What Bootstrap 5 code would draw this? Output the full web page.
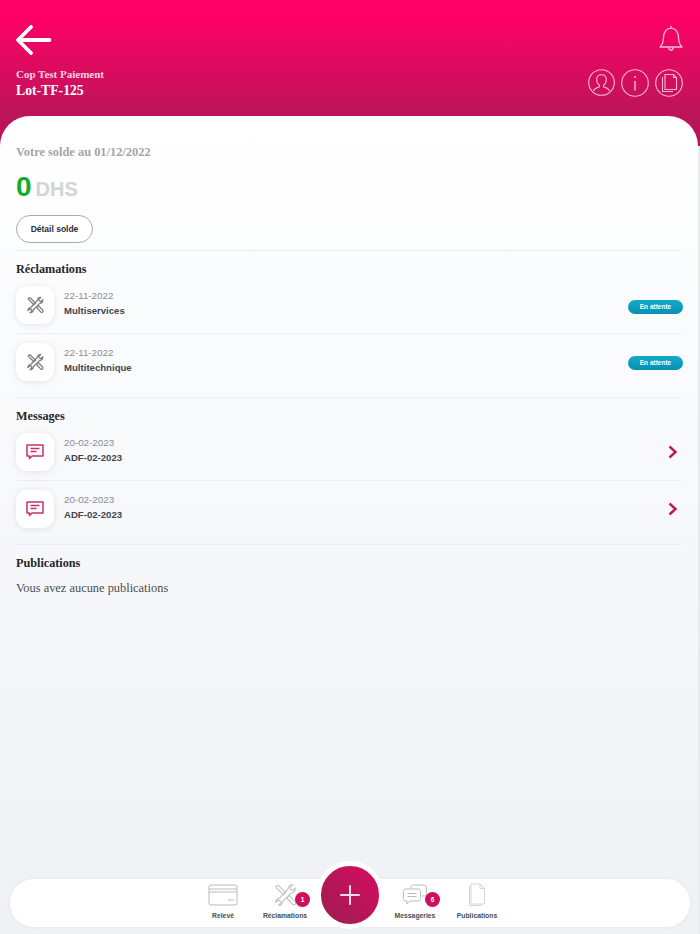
<!DOCTYPE html>
<html lang="fr">
<head>
  <meta charset="UTF-8">
  <title>Lot-TF-125</title>
  <link href="https://cdn.jsdelivr.net/npm/bootstrap@5.3.2/dist/css/bootstrap.min.css" rel="stylesheet">
  <style>
    body {
      background-color: #e9ebee;
      font-family: "Liberation Sans", Arial, sans-serif;
      overflow: hidden;
    }
    .screen {
      height: 934px;
    }
    .top-band {
      height: 146px;
      padding: 25px 16px 0 16px;
      background: linear-gradient(180deg, #ff0066 10%, #bb1559 80%);
      color: #fff;
    }
    .bell-col {
      margin-top: -1px;
    }
    .serif {
      font-family: "Liberation Serif", "Times New Roman", serif;
      font-weight: 700;
    }
    .cop-name {
      font-size: 11px;
      line-height: 12px;
      margin-top: 13px;
      color: #fbd3e2;
    }
    .lot-name {
      font-size: 13.7px;
      line-height: 16px;
      margin-top: 3px;
    }
    .round-icons {
      margin-top: 17px;
      gap: 6px;
      margin-right: 1px;
    }
    .sheet {
      margin-top: -30px;
      margin-right: 2px;
      border-radius: 30px 30px 0 0;
      background: linear-gradient(180deg, #ffffff 0%, #f9fafc 35%, #eff1f4 100%);
      padding: 29px 16px 7px 16px;
      min-height: 0;
    }
    .solde-date {
      font-size: 12.4px;
      line-height: 14px;
      color: #a3a5aa;
    }
    .solde-line {
      margin-top: 13px;
      line-height: 30px;
      font-weight: 700;
    }
    .solde-zero {
      font-size: 28px;
      color: #12ad2b;
    }
    .solde-unit {
      font-size: 20px;
      color: #d2d4d8;
      margin-left: 4px;
    }
    .solde-btn {
      width: 77px;
      height: 28px;
      margin-top: 9px;
      margin-bottom: 7px;
      padding: 0;
      font-size: 8.5px;
      font-weight: 700;
      color: #2a2d33;
      background: #fff;
      border: 1px solid #a9abaf;
      border-radius: 14px;
    }
    .section-head {
      border-top: 1px solid #eceef1;
      padding-top: 11px;
    }
    .block-title {
      font-size: 12.2px;
      line-height: 14px;
      margin-bottom: 1px;
      color: #23262b;
    }
    .entry {
      height: 56px;
      display: flex;
      align-items: center;
    }
    .entry + .entry {
      border-top: 1px solid #eceef1;
    }
    .tile {
      width: 38px;
      height: 38px;
      border-radius: 11px;
      background: #fff;
      box-shadow: 0 1px 6px rgba(60, 70, 90, .12);
      margin-right: 10px;
    }
    .entry-text {
      padding-bottom: 3px;
    }
    .entry-date {
      font-size: 9.8px;
      line-height: 12px;
      color: #8b8e94;
    }
    .entry-name {
      font-size: 9.6px;
      line-height: 12px;
      margin-top: 3px;
      font-weight: 700;
      color: #3f454d;
    }
    .wait-pill {
      width: 55px;
      height: 14px;
      margin: 3px -1px 0 0;
      border-radius: 7px;
      background: linear-gradient(180deg, #12aacb, #0a8fb3);
      color: #fff;
      font-size: 6.5px;
      font-weight: 700;
    }
    .empty-note {
      font-family: "Liberation Serif", "Times New Roman", serif;
      font-size: 12.4px;
      line-height: 14px;
      color: #4a4d52;
      margin-top: 11px;
    }
    .tab-bar {
      margin: auto -8px 0 -6px;
      height: 48px;
      border-radius: 24px;
      background: #fff;
      box-shadow: 0 0 4px rgba(60, 70, 90, .06);
    }
    .tab-item {
      width: 62px;
      height: 48px;
      padding-top: 4px;
      color: #4a4d52;
      font-size: 6.8px;
      font-weight: 700;
      line-height: 8px;
    }
    .tab-icon {
      height: 24px;
      margin-bottom: 5px;
    }
    .count-dot {
      position: absolute;
      top: 13px;
      right: 6px;
      width: 15px;
      height: 15px;
      border-radius: 50%;
      background: #cf0f5e;
      color: #fff;
      font-size: 6.5px;
      line-height: 15px;
      text-align: center;
    }
    .add-btn {
      width: 68px;
      height: 68px;
      margin-top: -18px;
      padding: 0;
      border: 5px solid #fff;
      border-radius: 50%;
      background: linear-gradient(45deg, #9d1d52, #d60c60);
      flex: none;
    }
  </style>
</head>
<body>

<div class="screen d-flex flex-column">
  <header class="top-band d-flex justify-content-between">
    <div>
      <svg width="36" height="30" viewBox="0 0 36 30" fill="none" stroke="#fff" stroke-width="3.8" stroke-linecap="round" stroke-linejoin="round" class="d-block">
        <path d="M33.500 15H2.500M15 2 2 15 15 28"/>
      </svg>
      <div class="serif cop-name">Cop Test Paiement</div>
      <div class="serif lot-name">Lot-TF-125</div>
    </div>
    <div class="bell-col d-flex flex-column align-items-end">
      <svg width="26" height="28" viewBox="0 0 26 28" fill="none" stroke="#f9bcd3" stroke-width="1.3" stroke-linejoin="round" class="d-block">
        <path d="M2 23c2.500-2.500 3.500-5 3.500-9.500C5.500 8 8.500 4.200 13 4.200S20.500 8 20.500 13.500c0 4.500 1 7 3.500 9.500zM13 4.200V1.800M10.500 23.500c.5 1.800 1.400 2.600 2.500 2.600s2-.8 2.500-2.600"/>
      </svg>
      <div class="d-flex round-icons">
        <svg width="27" height="27" viewBox="0 0 27 27" fill="none" stroke="#f6b6cf" stroke-width="1.1">
          <circle cx="13.500" cy="13.500" r="12.800"/>
          <path d="M5.500 22c.5-2.500 3.500-3 6-4.300v-1.500c-1.800-1.200-2.800-3.200-2.800-5.700 0-3 2-4.800 4.800-4.800s4.800 1.800 4.800 4.800c0 2.500-1 4.500-2.800 5.700v1.500c2.500 1.300 5.500 1.800 6 4.300"/>
        </svg>
        <svg width="28" height="28" viewBox="0 0 28 28" fill="none" stroke="#f6b6cf" stroke-width="1.1">
          <circle cx="14" cy="14" r="13.300"/>
          <path d="M14 12v9.500" stroke-width="1.500"/>
          <path d="M14 7v1.800" stroke-width="1.800"/>
        </svg>
        <svg width="28" height="28" viewBox="0 0 28 28" fill="none" stroke="#f6b6cf" stroke-width="1.1">
          <circle cx="14" cy="14" r="13.300"/>
          <path d="M7.500 8v14.500H18M10 5.500h8.500l3 3v12H10zM18.500 5.500v3h3"/>
        </svg>
      </div>
    </div>
  </header>

  <main class="sheet flex-grow-1 d-flex flex-column">
    <div class="serif solde-date">Votre solde au 01/12/2022</div>
    <div class="solde-line"><span class="solde-zero">0</span><span class="solde-unit">DHS</span></div>
    <button type="button" class="btn solde-btn d-block">Détail solde</button>

    <div class="section-head">
      <div class="serif block-title">Réclamations</div>
    </div>
    <div class="entry">
      <div class="tile d-flex align-items-center justify-content-center">
        <svg width="18" height="18" viewBox="0 0 20 20" fill="none" stroke="#7b7e84" stroke-width="1.400" stroke-linejoin="round" stroke-linecap="round">
          <path d="M2.500 2.500 4.500 2l6 6-1.800 1.800-6-6zM16.500 1.500l-2.300 2.300.7 1.700 1.700.7 2-2c.3 2-1 4-3.300 4L8 15.500c0 2-1.500 3.300-3.500 3.100l2-2-.6-1.700-1.700-.6-2 2c-.2-2 1.200-3.500 3.100-3.500L12.500 5c0-2 2-3.800 4-3.500zM11.500 12.500l2-2 5 5c.5.800.5 1.500 0 2.200-.7.600-1.500.6-2.200 0z"/>
        </svg>
      </div>
      <div class="entry-text flex-grow-1">
        <div class="entry-date">22-11-2022</div>
        <div class="entry-name">Multiservices</div>
      </div>
      <div class="wait-pill d-flex align-items-center justify-content-center">En attente</div>
    </div>
    <div class="entry">
      <div class="tile d-flex align-items-center justify-content-center">
        <svg width="18" height="18" viewBox="0 0 20 20" fill="none" stroke="#7b7e84" stroke-width="1.400" stroke-linejoin="round" stroke-linecap="round">
          <path d="M2.500 2.500 4.500 2l6 6-1.800 1.800-6-6zM16.500 1.500l-2.300 2.300.7 1.700 1.700.7 2-2c.3 2-1 4-3.300 4L8 15.500c0 2-1.500 3.300-3.500 3.100l2-2-.6-1.700-1.700-.6-2 2c-.2-2 1.200-3.500 3.100-3.500L12.500 5c0-2 2-3.800 4-3.500zM11.500 12.500l2-2 5 5c.5.800.5 1.500 0 2.200-.7.600-1.500.6-2.200 0z"/>
        </svg>
      </div>
      <div class="entry-text flex-grow-1">
        <div class="entry-date">22-11-2022</div>
        <div class="entry-name">Multitechnique</div>
      </div>
      <div class="wait-pill d-flex align-items-center justify-content-center">En attente</div>
    </div>

    <div class="section-head mt-2">
      <div class="serif block-title">Messages</div>
    </div>
    <div class="entry">
      <div class="tile d-flex align-items-center justify-content-center">
        <svg width="20" height="20" viewBox="0 0 20 20" fill="none" stroke="#c5306f" stroke-width="1.500" stroke-linejoin="round">
          <path d="M2 3h16v11H7l-2.500 2.500V14H2zM5.500 6.500h9M5.500 9.500h6"/>
        </svg>
      </div>
      <div class="entry-text flex-grow-1">
        <div class="entry-date">20-02-2023</div>
        <div class="entry-name">ADF-02-2023</div>
      </div>
      <svg width="10" height="14" viewBox="0 0 10 14" fill="none" stroke="#c2185b" stroke-width="2.400" class="me-1">
        <path d="M1.500 1.500 7.500 7l-6 5.500"/>
      </svg>
    </div>
    <div class="entry">
      <div class="tile d-flex align-items-center justify-content-center">
        <svg width="20" height="20" viewBox="0 0 20 20" fill="none" stroke="#c5306f" stroke-width="1.500" stroke-linejoin="round">
          <path d="M2 3h16v11H7l-2.500 2.500V14H2zM5.500 6.500h9M5.500 9.500h6"/>
        </svg>
      </div>
      <div class="entry-text flex-grow-1">
        <div class="entry-date">20-02-2023</div>
        <div class="entry-name">ADF-02-2023</div>
      </div>
      <svg width="10" height="14" viewBox="0 0 10 14" fill="none" stroke="#c2185b" stroke-width="2.400" class="me-1">
        <path d="M1.500 1.500 7.500 7l-6 5.500"/>
      </svg>
    </div>

    <div class="section-head mt-2">
      <div class="serif block-title">Publications</div>
      <div class="empty-note">Vous avez aucune publications</div>
    </div>

    <nav class="tab-bar d-flex justify-content-center">
      <div class="tab-item text-center position-relative">
        <svg class="tab-icon d-block mx-auto" width="30" height="24" viewBox="0 0 30 24" fill="none" stroke="#b9bbbf" stroke-width="1">
          <rect x="1" y="2" width="28" height="20" rx="2"/>
          <path d="M1 6h28M1 9h28M20 17h6"/>
        </svg>
        Relevé
      </div>
      <div class="tab-item text-center position-relative">
        <svg class="tab-icon d-block mx-auto" width="24" height="24" viewBox="0 0 20 20" fill="none" stroke="#c3c5c9" stroke-width="1" stroke-linejoin="round">
          <path d="M2.500 2.500 4.500 2l6 6-1.800 1.800-6-6zM16.500 1.500l-2.300 2.300.7 1.700 1.700.7 2-2c.3 2-1 4-3.300 4L8 15.500c0 2-1.500 3.300-3.500 3.100l2-2-.6-1.700-1.700-.6-2 2c-.2-2 1.200-3.500 3.100-3.500L12.500 5c0-2 2-3.800 4-3.500zM11.500 12.500l2-2 5 5c.5.800.5 1.500 0 2.200-.7.600-1.500.6-2.200 0z"/>
        </svg>
        Réclamations
        <span class="count-dot">1</span>
      </div>
      <button type="button" class="add-btn d-flex align-items-center justify-content-center" aria-label="Ajouter">
        <svg width="22" height="22" viewBox="0 0 22 22" stroke="#f5dbe6" stroke-width="2" stroke-linecap="round">
          <path d="M11 2v18M2 11h18"/>
        </svg>
      </button>
      <div class="tab-item text-center position-relative">
        <svg class="tab-icon d-block mx-auto" width="26" height="24" viewBox="0 0 26 24" fill="none" stroke="#b9bbbf" stroke-width="1" stroke-linejoin="round">
          <path d="M9 6V4.500C9 3 10 2 11.500 2H22c1.500 0 2.500 1 2.500 2.500v6c0 1.500-1 2.500-2.500 2.500h-2"/>
          <path d="M4 6h12c1.500 0 2.500 1 2.500 2.500v7c0 1.500-1 2.500-2.500 2.500H8l-3 3v-3H4c-1.500 0-2.500-1-2.500-2.500v-7C1.500 7 2.500 6 4 6zM5.500 10.500h9M5.500 13.500h9"/>
        </svg>
        Messageries
        <span class="count-dot">6</span>
      </div>
      <div class="tab-item text-center position-relative">
        <svg class="tab-icon d-block mx-auto" width="20" height="24" viewBox="0 0 20 24" fill="none" stroke="#d3d5d8" stroke-width="1" stroke-linejoin="round">
          <path d="M4 3.500H2.500v19H14V21M4 1h9l4.500 4.500V21H4zM13 1v4.500h4.500"/>
        </svg>
        Publications
      </div>
    </nav>
  </main>
</div>

<script src="https://cdn.jsdelivr.net/npm/bootstrap@5.3.2/dist/js/bootstrap.bundle.min.js"></script>
</body>
</html>
